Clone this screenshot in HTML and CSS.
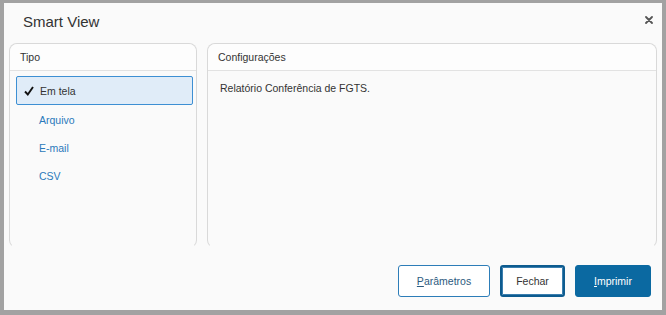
FILE: index.html
```html
<!DOCTYPE html>
<html lang="pt-BR">
<head>
  <meta charset="UTF-8" />
  <title>Smart View</title>
  <link rel="stylesheet" href="styles.css">
</head>
<body>
  <div class="dialog">
    <div class="dialog-header">
      <h1>Smart View</h1>
      <button class="close" title="Fechar">
        <svg width="8" height="8" viewBox="0 0 8 8"><path d="M1 1 L7 7 M7 1 L1 7" stroke="#555" stroke-width="1.8" stroke-linecap="round"/></svg>
      </button>
    </div>

    <div class="panels">
      <div class="panel panel-type">
        <div class="panel-title">Tipo</div>
        <ul class="type-list">
          <li class="active">
            <span class="check"><svg width="10" height="10" viewBox="0 0 10 10"><path d="M1 5.5 L3.8 8.5 L9 1" fill="none" stroke="#111" stroke-width="1.9"/></svg></span>
            Em tela
          </li>
          <li><span class="check"></span>Arquivo</li>
          <li><span class="check"></span>E-mail</li>
          <li><span class="check"></span>CSV</li>
        </ul>
      </div>

      <div class="panel panel-config">
        <div class="panel-title">Configurações</div>
        <div class="panel-body">Relatório Conferência de FGTS.</div>
      </div>
    </div>

    <div class="footer">
      <button class="btn btn-outline"><u>P</u>arâmetros</button>
      <button class="btn btn-focus">Fechar</button>
      <button class="btn btn-primary"><u>I</u>mprimir</button>
    </div>
  </div>
</body>
</html>
```

FILE: styles.css
```css
* {
  box-sizing: border-box;
}

html, body {
  height: 100%;
}

body {
  margin: 0;
  padding: 3px 4px 5px 4px;
  background: #a2a2a2;
  font-family: "Liberation Sans", Arial, sans-serif;
  color: #333;
}

.dialog {
  height: 100%;
  background: #fafafa;
  display: flex;
  flex-direction: column;
}

.dialog-header {
  height: 40px;
  display: flex;
  align-items: flex-start;
  justify-content: space-between;
  padding: 0 9px 0 19px;
}

.dialog-header h1 {
  margin: 0;
  font-size: 15px;
  font-weight: normal;
  line-height: 38px;
  color: #333;
}

.close {
  border: none;
  background: none;
  padding: 0;
  margin-top: 13px;
  width: 8px;
  height: 8px;
  display: flex;
  cursor: pointer;
}

.panels {
  display: flex;
  gap: 10px;
  padding: 0 5px;
  height: 205px;
}

.panel {
  border: 1px solid #d9d9d9;
  border-bottom-color: transparent;
  border-radius: 8px;
  background: #fafafa;
  display: flex;
  flex-direction: column;
}

.panel-type {
  width: 188px;
}

.panel-config {
  flex: 1;
}

.panel-title {
  height: 27px;
  line-height: 26px;
  padding-left: 10px;
  font-size: 10.5px;
  background: #fdfdfd;
  border-bottom: 1px solid #e2e2e2;
  border-radius: 8px 8px 0 0;
  color: #333;
}

.type-list {
  list-style: none;
  margin: 0;
  padding: 5px 3px 0 6px;
}

.type-list li {
  height: 28px;
  display: flex;
  align-items: center;
  padding-left: 7px;
  padding-top: 1px;
  border: 1px solid transparent;
  border-radius: 2px;
  font-size: 10.5px;
  color: #2a79ba;
}

.type-list li.active {
  height: 29px;
  background: #e0ecf8;
  border-color: #3d8fd3;
  color: #333;
}

.check {
  width: 16px;
  display: flex;
}

.type-list li:not(.active) .check {
  width: 15px;
}

.panel-body {
  padding: 11px 12px;
  font-size: 10.5px;
  line-height: 13px;
  color: #333;
}

.footer {
  display: flex;
  justify-content: flex-end;
  gap: 10px;
  padding: 17px 11px 0 0;
}

.btn {
  height: 32px;
  border-radius: 3px;
  font-family: "Liberation Sans", Arial, sans-serif;
  font-size: 10.5px;
  cursor: pointer;
}

.btn-outline {
  width: 92px;
  background: #fff;
  border: 1px solid #2d7db8;
  color: #2c5a7e;
}

.btn-focus {
  width: 65px;
  background: #fff;
  border: 2px solid #0d5b8f;
  box-shadow: inset 0 0 0 1px #3a7eae;
  color: #333;
}

.btn-primary {
  width: 76px;
  background: #0b69a1;
  border: 1px solid #0b69a1;
  color: #fff;
}
```
